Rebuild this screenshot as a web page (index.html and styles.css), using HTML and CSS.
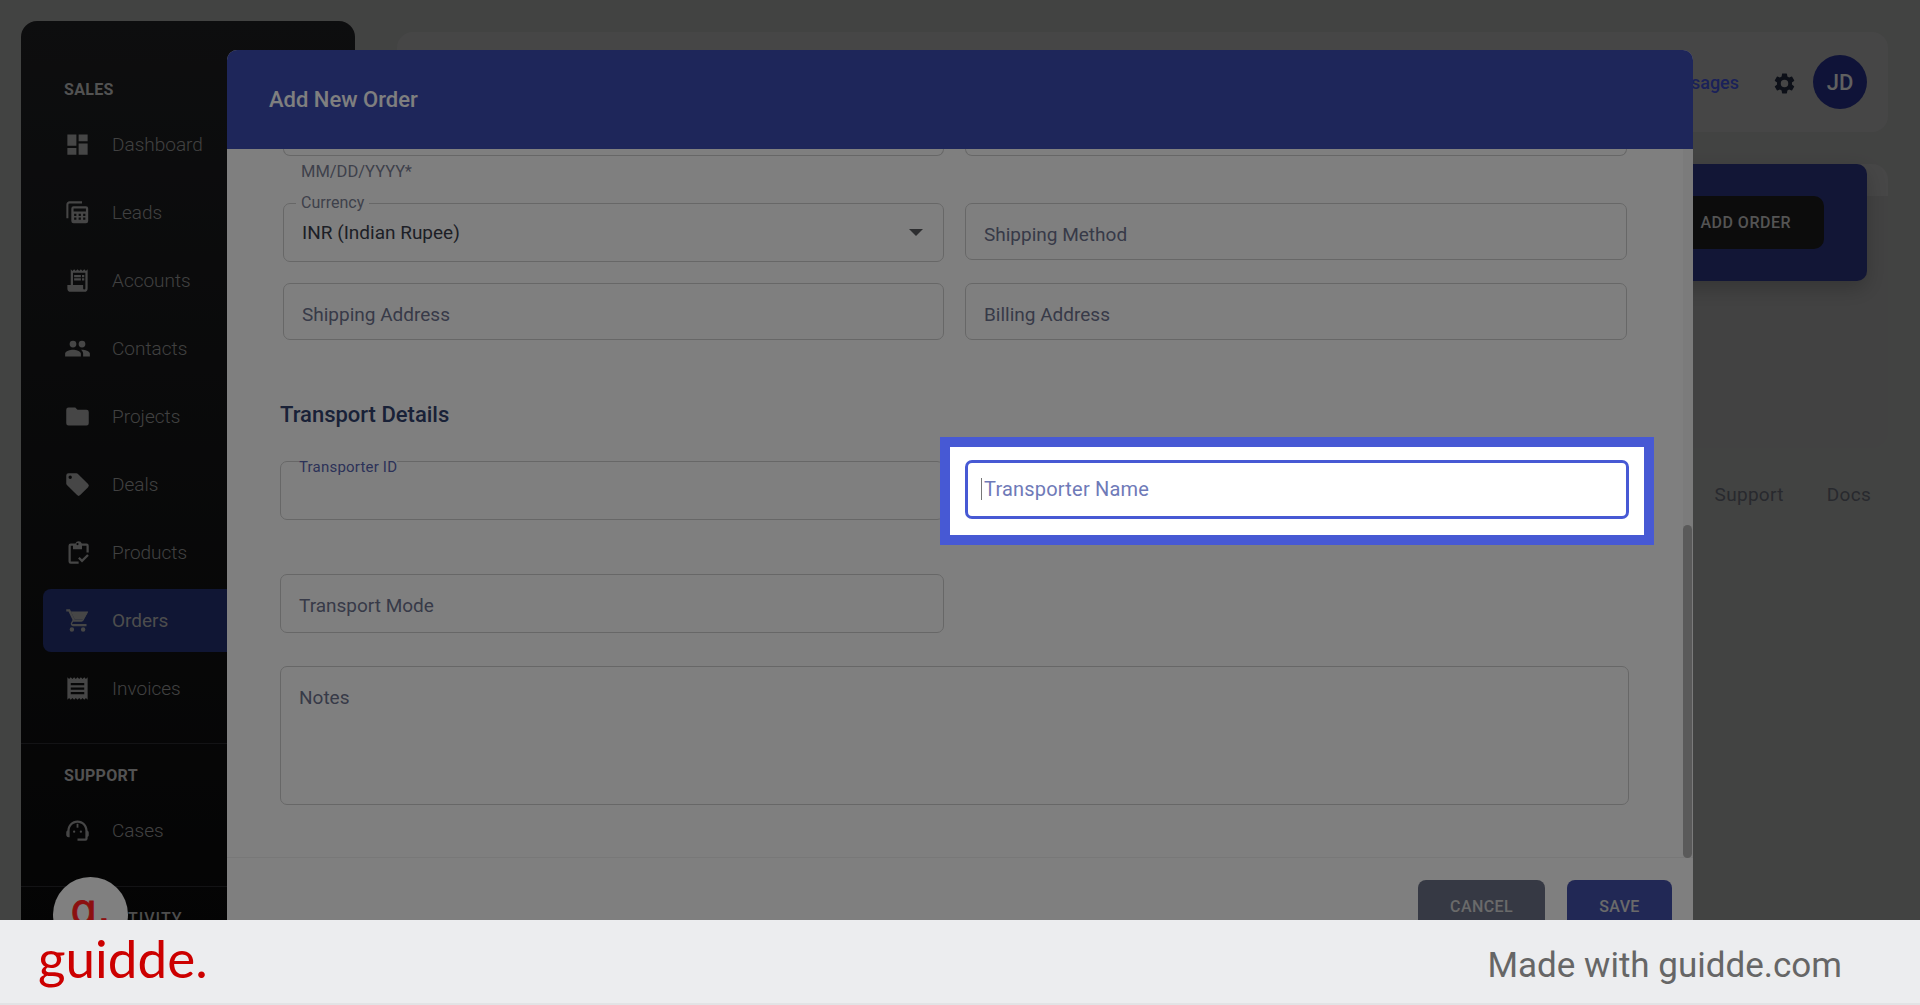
FILE: index.html
```html
<!DOCTYPE html>
<html lang="en">

<head>
    <meta charset="UTF-8">
    <meta name="viewport" content="width=device-width, initial-scale=1.0">
    <title>Add New Order</title>
    <link rel="stylesheet" href="styles.css">
</head>

<body>
    <div class="stage">
        <!-- Page behind the dialog -->
        <div class="page">
            <aside class="sidebar">
                <div class="side-group">
                    <div class="side-title">SALES</div>
                    <div class="side-item"><svg class="side-icon" viewBox="0 0 24 24"><path d="M3 13h8V3H3v10zm0 8h8v-6H3v6zm10 0h8V11h-8v10zm0-18v6h8V3h-8z"/></svg>Dashboard</div>
                    <div class="side-item"><svg class="side-icon" viewBox="0 0 24 24"><path d="M3 17V5a2 2 0 0 1 2-2h11" fill="none" stroke="#8c8c8c" stroke-width="1.800"/><path fill-rule="evenodd" d="M8.500 6.500h11a2 2 0 0 1 2 2v11a2 2 0 0 1-2 2h-11a2 2 0 0 1-2-2v-11a2 2 0 0 1 2-2zm0 2v2.500h11V8.500h-11zm.5 4.500v2h2v-2H9zm4 0v2h2v-2h-2zm4 0v2h2v-2h-2zm-8 3.500v2h2v-2H9zm4 0v2h2v-2h-2zm4 0v2h2v-2h-2z"/></svg>Leads</div>
                    <div class="side-item"><svg class="side-icon" viewBox="0 0 24 24"><path d="M19.500 3.500 18 2l-1.500 1.500L15 2l-1.500 1.500L12 2l-1.500 1.500L9 2 7.500 3.500 6 2v14H3v3a3 3 0 0 0 3 3h12a3 3 0 0 0 3-3V2l-1.500 1.500zM19 19a1 1 0 0 1-2 0v-3H8V5h11v14zM9 7h6v2H9V7zm7 0h2v2h-2V7zM9 10h6v2H9v-2zm7 0h2v2h-2v-2z"/></svg>Accounts</div>
                    <div class="side-item"><svg class="side-icon" viewBox="0 0 24 24"><path d="M16 11a3 3 0 1 0 0-6 3 3 0 0 0 0 6zm-8 0a3 3 0 1 0 0-6 3 3 0 0 0 0 6zm0 2c-2.330 0-7 1.170-7 3.500V19h14v-2.500C15 14.170 10.330 13 8 13zm8 0c-.29 0-.62.02-.97.05 1.160.84 1.970 1.970 1.970 3.450V19h6v-2.500c0-2.330-4.670-3.500-7-3.500z"/></svg>Contacts</div>
                    <div class="side-item"><svg class="side-icon" viewBox="0 0 24 24"><path d="M10 4H4a2 2 0 0 0-2 2v12a2 2 0 0 0 2 2h16a2 2 0 0 0 2-2V8a2 2 0 0 0-2-2h-8l-2-2z"/></svg>Projects</div>
                    <div class="side-item"><svg class="side-icon" viewBox="0 0 24 24"><path d="m21.410 11.580-9-9A2 2 0 0 0 11 2H4a2 2 0 0 0-2 2v7c0 .55.22 1.050.59 1.420l9 9a2 2 0 0 0 2.820 0l7-7a2 2 0 0 0 0-2.840zM5.500 7a1.500 1.500 0 1 1 0-3 1.500 1.500 0 0 1 0 3z"/></svg>Deals</div>
                    <div class="side-item"><svg class="side-icon" viewBox="0 0 24 24"><path d="M18 6h2v6h2V6a2 2 0 0 0-2-2h-4.180a3 3 0 0 0-5.640 0H6a2 2 0 0 0-2 2v14a2 2 0 0 0 2 2h7v-2H6V6h2v3h8V6h2zm-6-2.500a1 1 0 1 1 0 2 1 1 0 0 1 0-2z"/><path d="m20.600 13.500 1.400 1.400-6 6-3.500-3.500 1.400-1.400 2.100 2.100z"/></svg>Products</div>
                    <div class="side-item active"><svg class="side-icon" viewBox="0 0 24 24"><path d="M7 18a2 2 0 1 0 0 4 2 2 0 0 0 0-4zm10 0a2 2 0 1 0 0 4 2 2 0 0 0 0-4zM7.170 14.750l.03-.12.900-1.630h7.450c.75 0 1.410-.41 1.750-1.030l3.860-7.010L20.420 4l-3.870 7H9.530L5.270 2H2v2h2l3.600 7.590-1.350 2.450A2 2 0 0 0 8 17h12v-2H7.420a.25.25 0 0 1-.25-.25z"/><path d="M6 4h15.500l-4.200 7H9.500z"/></svg>Orders</div>
                    <div class="side-item"><svg class="side-icon" viewBox="0 0 24 24"><path d="m19.500 3.500-1.500-1.500-1.500 1.500L15 2l-1.500 1.500L12 2l-1.500 1.500L9 2 7.500 3.500 6 2 4.500 3.500 3 2v20l1.500-1.500L6 22l1.500-1.500L9 22l1.500-1.500L12 22l1.500-1.500L15 22l1.500-1.500L18 22l1.500-1.500L21 22V2l-1.500 1.500zM18 17H6v-2h12v2zm0-4H6v-2h12v2zm0-4H6V7h12v2z"/></svg>Invoices</div>
                </div>
                <div class="side-group support">
                    <div class="side-title">SUPPORT</div>
                    <div class="side-item"><svg class="side-icon" viewBox="0 0 24 24"><path d="M21 12.200C21 7.100 17 3 12 3S3 7.100 3 12.100c-.6.300-1 1-1 1.800v2c0 1.100.9 2 2 2h1v-5.900C5 8.200 8.100 5 12 5s7 3.200 7 7.100V19h-7v2h7a2 2 0 0 0 2-2v-1.200c.6-.3 1-.9 1-1.700v-2.200c0-.8-.4-1.400-1-1.700z"/><circle cx="9" cy="13" r="1"/><circle cx="15" cy="13" r="1"/><path d="M11.200 6v3.500h1.600V6z"/></svg>Cases</div>
                </div>
                <div class="side-group activity-group">
                    <div class="side-title activity">TIVITY</div>
                </div>
            </aside>

            <main class="main">
                <header class="topbar">
                    <a class="top-link">Messages</a>
                    <svg class="gear" viewBox="0 0 24 24"><path d="M19.140 12.940c.04-.3.060-.61.060-.94 0-.32-.02-.64-.07-.94l2.030-1.580a.49.49 0 0 0 .12-.61l-1.920-3.320a.49.49 0 0 0-.59-.22l-2.390.96c-.5-.38-1.030-.7-1.620-.94l-.36-2.540a.48.48 0 0 0-.48-.41h-3.840c-.24 0-.43.170-.47.410l-.36 2.540c-.59.240-1.130.570-1.620.94l-2.390-.96a.49.49 0 0 0-.59.220L2.740 8.870c-.12.210-.08.470.12.610l2.030 1.580c-.05.300-.09.630-.09.940s.02.640.07.940l-2.030 1.580a.49.49 0 0 0-.12.610l1.920 3.320c.12.220.37.290.59.220l2.390-.96c.5.380 1.030.7 1.620.94l.36 2.540c.05.240.24.410.48.410h3.840c.24 0 .44-.17.470-.41l.36-2.540c.59-.24 1.130-.56 1.620-.94l2.390.96c.22.080.47 0 .59-.22l1.920-3.320a.48.48 0 0 0-.12-.61l-2.010-1.580zM12 15.600a3.600 3.600 0 1 1 0-7.200 3.600 3.600 0 0 1 0 7.200z"/></svg>
                    <div class="avatar">JD</div>
                </header>
                <div class="panel">
                    <div class="hero">
                        <button class="add-btn">ADD ORDER</button>
                    </div>
                </div>
                <nav class="foot-links">
                    <span>Support</span>
                    <span>Docs</span>
                </nav>
            </main>
        </div>

        <!-- Add order dialog -->
        <div class="modal">
            <div class="modal-head">Add New Order</div>
            <div class="modal-body">
                <div class="scroll-thumb"></div>
                <div class="form-top">
                    <div class="box cut"></div>
                    <div class="box cut"></div>
                    <div class="hint">MM/DD/YYYY*</div>
                    <div></div>
                    <div class="box select">
                        <span class="legend">Currency</span>
                        <span class="value">INR (Indian Rupee)</span>
                        <span class="arrow"></span>
                    </div>
                    <div class="box">Shipping Method</div>
                    <div class="box">Shipping Address</div>
                    <div class="box">Billing Address</div>
                </div>
                <h3 class="section-title">Transport Details</h3>
                <div class="form-bottom">
                    <div class="box tall">
                        <span class="legend focus">Transporter ID</span>
                    </div>
                    <div class="spot-wrap">
                        <div class="spot">
                            <div class="spot-input"><span class="caret"></span>Transporter Name</div>
                        </div>
                    </div>
                    <div class="box tall">Transport Mode</div>
                    <div></div>
                    <div class="box notes">Notes</div>
                </div>
            </div>
            <div class="modal-foot">
                <button class="btn cancel">CANCEL</button>
                <button class="btn save">SAVE</button>
            </div>
        </div>

        <div class="backdrop"></div>
        <div class="logo-badge">ɑ.</div>
    </div>

    <footer class="brand-bar">
        <div class="brand-logo">guidde.</div>
        <div class="brand-note">Made with guidde.com</div>
    </footer>
</body>

</html>
```

FILE: styles.css
```css
/* Dialog screen with guidde footer */
* {
    box-sizing: border-box;
}

body {
    margin: 0;
    height: 1005px;
    overflow: hidden;
    font-family: Roboto, sans-serif;
    background: #ecedef;
}

.stage {
    position: relative;
    height: 920px;
    overflow: hidden;
}

.page {
    display: flex;
    gap: 42px;
    height: 100%;
    padding: 21px 32px 0 21px;
    background: #858685;
}

.backdrop {
    position: absolute;
    inset: 0;
    z-index: 10;
    background: rgba(0, 0, 0, 0.5);
}

/* Sidebar */
.sidebar {
    flex: none;
    width: 334px;
    height: 1000px;
    padding: 53px 22px 0;
    border-radius: 16px;
    background: linear-gradient(#1b1c1e, #070707);
    color: #fff;
}

.side-title {
    margin: 0 0 7px 21px;
    height: 32px;
    line-height: 32px;
    font-size: 16px;
    font-weight: 700;
    letter-spacing: 0.3px;
    color: #a4a4a4;
}

.side-item {
    display: flex;
    align-items: center;
    gap: 21px;
    height: 63px;
    margin-bottom: 5px;
    padding-left: 21px;
    border-radius: 8px;
    font-size: 19px;
    font-weight: 300;
    color: #828282;
}

.side-item.active {
    background: #202c68;
    color: #9a9a9a;
    font-weight: 400;
}

.side-icon {
    flex: none;
    width: 27px;
    height: 27px;
    fill: #8c8c8c;
}

.support {
    margin: 23px -22px 0;
    padding: 16px 22px 0;
    border-top: 1px solid #26272a;
}

.activity-group {
    margin: 24px -22px 0;
    padding: 16px 22px 0;
    border-top: 1px solid #26272a;
}

.side-title.activity {
    margin-left: 85px;
    font-weight: 500;
    letter-spacing: 1px;
    color: #9a9a9a;
}

/* Main area behind the dialog */
.main {
    flex: 1;
    min-width: 0;
}

.topbar {
    display: flex;
    align-items: center;
    justify-content: flex-end;
    height: 100px;
    margin: 11px 0 32px;
    padding-right: 21px;
    border-radius: 16px;
    background: #8d8d8d;
}

.top-link {
    font-size: 18px;
    font-weight: 500;
    color: #3542b2;
}

.gear {
    width: 25px;
    height: 25px;
    margin: 3px 16px 0 33px;
    fill: #1a2030;
}

.avatar {
    display: flex;
    align-items: center;
    justify-content: center;
    width: 54px;
    height: 54px;
    border-radius: 50%;
    background: #1f2770;
    color: #c0c0c0;
    font-size: 22px;
    font-weight: 500;
}

.panel {
    height: 284px;
    padding-right: 21px;
    border-radius: 16px;
    background: linear-gradient(#8e8e8e 32px, #858585 32px);
}

.hero {
    display: flex;
    align-items: center;
    justify-content: flex-end;
    height: 117px;
    padding-right: 43px;
    border-radius: 10px;
    background: #252c6d;
    box-shadow: 0 8px 20px rgba(0, 0, 0, 0.2);
}

.add-btn {
    width: 240px;
    height: 53px;
    padding: 0 33px 0 0;
    border: none;
    border-radius: 10px;
    background: #181818;
    color: #a8a8a8;
    font: 500 16px Roboto, sans-serif;
    letter-spacing: 0.5px;
    text-align: right;
}

.foot-links {
    display: flex;
    justify-content: flex-end;
    gap: 43px;
    margin-top: 35px;
    padding-right: 17px;
    font-size: 19px;
    font-weight: 400;
    letter-spacing: 0.3px;
    color: #50535c;
}

/* Dialog */
.modal {
    position: absolute;
    top: 50px;
    left: 227px;
    width: 1466px;
    height: 900px;
    border-radius: 10px 10px 0 0;
    background: #fff;
    overflow: hidden;
}

.modal-head {
    height: 99px;
    padding: 38px 0 0 42px;
    background: #3d4cb5;
    color: #fff;
    font-size: 22px;
    line-height: 24px;
    font-weight: 500;
}

.modal-body {
    position: relative;
    height: 709px;
    padding: 0 64px 0 53px;
    border-bottom: 1px solid #f0f0f0;
    background: linear-gradient(to left, #f6f6f6 10px, #fff 10px);
}

.scroll-thumb {
    position: absolute;
    top: 376px;
    right: 1px;
    width: 9px;
    height: 333px;
    border-radius: 5px;
    background: #b4b4b4;
}

.form-top {
    display: grid;
    grid-template-columns: 661px 662px;
    grid-template-rows: 7px 47px 58px 57px;
    gap: 0 21px;
    margin-left: 3px;
}

.box {
    display: flex;
    align-items: center;
    position: relative;
    padding: 5px 18px 0;
    border: 1px solid #cfcfcf;
    border-radius: 7px;
    font-size: 19px;
    color: #6f7490;
}

.cut {
    border-top: none;
    border-radius: 0 0 7px 7px;
}

.hint {
    padding: 1px 0 0 18px;
    font-size: 16.500px;
    line-height: 30px;
    color: #7d8296;
}

.form-top .box {
    height: 57px;
}

.form-top .cut {
    height: 7px;
}

.form-top .select {
    height: 59px;
}

.form-top .box:nth-child(n+7) {
    margin-top: 22px;
}

.select {
    justify-content: space-between;
    padding: 0 20px 0 18px;
}

.legend {
    position: absolute;
    top: -9px;
    left: 12px;
    padding: 0 5px;
    background: #fff;
    font-size: 16px;
    line-height: 16px;
    color: #7d8296;
}

.legend.focus {
    top: -3px;
    left: 18px;
    padding: 0;
    font-size: 15px;
    letter-spacing: 0.2px;
    color: #5864b0;
}

.value {
    font-size: 19px;
    color: #3b3f4c;
}

.arrow {
    width: 0;
    height: 0;
    border-left: 7px solid transparent;
    border-right: 7px solid transparent;
    border-top: 7px solid #5a5c60;
}

.section-title {
    margin: 0;
    padding-top: 85px;
    height: 143px;
    font-size: 22px;
    line-height: 24px;
    font-weight: 500;
    color: #33436f;
}

.form-bottom {
    display: grid;
    grid-template-columns: 664px 664px;
    gap: 0 21px;
}

.tall {
    height: 59px;
    padding-top: 3px;
}

.form-bottom .box:nth-child(1) {
    margin-bottom: 54px;
}

.form-bottom .notes {
    grid-column: 1 / 3;
    align-items: flex-start;
    width: 1349px;
    height: 139px;
    margin-top: 33px;
    padding-top: 19px;
    line-height: 24px;
}

/* Highlighted field stays bright above the backdrop */
.spot-wrap {
    position: relative;
}

.spot {
    position: absolute;
    top: -24px;
    left: -25px;
    z-index: 20;
    width: 714px;
    height: 108px;
    padding: 13px 15px 0;
    border: 10px solid #4759d4;
    background: #fff;
}

.spot-input {
    display: flex;
    align-items: center;
    width: 664px;
    height: 59px;
    padding: 0 0 2px 13px;
    border: 3px solid #4759d4;
    border-radius: 7px;
    font-size: 20px;
    letter-spacing: 0.2px;
    color: #6f7ab8;
}

.caret {
    width: 1px;
    height: 22px;
    margin-right: 2px;
    background: #777;
}

.modal-foot {
    display: flex;
    justify-content: flex-end;
    gap: 22px;
    padding: 22px 21px 0 0;
}

.btn {
    height: 56px;
    padding: 0 0 3px;
    border: none;
    border-radius: 8px;
    color: #d4d4d4;
    font: 500 16px Roboto, sans-serif;
    letter-spacing: 0.4px;
}

.cancel {
    width: 127px;
    background: #6c7389;
}

.save {
    width: 105px;
    background: #4350ab;
}

.logo-badge {
    position: absolute;
    top: 877px;
    left: 53px;
    z-index: 15;
    width: 75px;
    height: 75px;
    border-radius: 50%;
    background: #808080;
    color: #8c1010;
    font-family: "DejaVu Sans", sans-serif;
    font-size: 42px;
    line-height: 66px;
    text-align: center;
    -webkit-text-stroke: 0.8px #8c1010;
}

/* Bottom brand strip */
.brand-bar {
    display: flex;
    align-items: center;
    justify-content: space-between;
    height: 85px;
    padding: 0 78px 0 38px;
    border-bottom: 2px solid #e2e3e5;
    background: #ecedef;
}

.brand-logo {
    padding-bottom: 8px;
    font-family: Lato, sans-serif;
    font-size: 53px;
    line-height: 60px;
    color: #cc0000;
}

.brand-note {
    padding-top: 7px;
    font-size: 35px;
    color: #666;
}
```
